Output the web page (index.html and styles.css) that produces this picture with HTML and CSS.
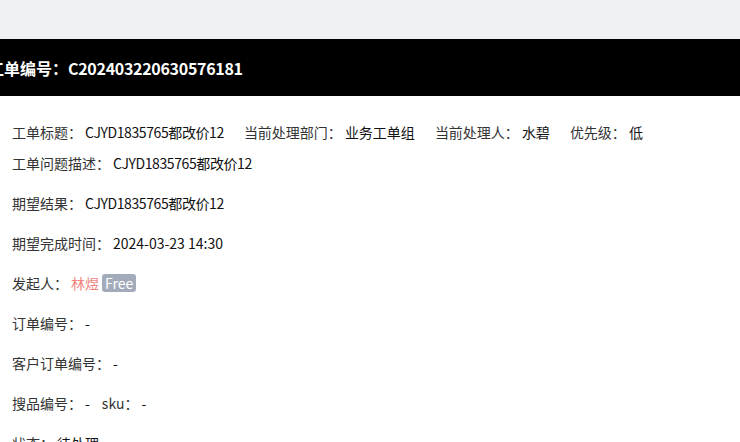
FILE: index.html
```html
<!DOCTYPE html>
<html lang="zh">
<head>
<meta charset="utf-8">
<link rel="stylesheet" href="styles.css">
</head>
<body>
<div class="topbar"></div>
<div class="header"><h1 class="title">工单编号：<span class="num">C202403220630576181</span></h1></div>
<div class="content">
  <div class="row row-first">
    <span class="item"><span class="label">工单标题：</span><span class="value code">CJYD1835765都改价12</span></span>
    <span class="item"><span class="label">当前处理部门：</span><span class="value">业务工单组</span></span>
    <span class="item"><span class="label">当前处理人：</span><span class="value">水碧</span></span>
    <span class="item"><span class="label">优先级：</span><span class="value">低</span></span>
  </div>
  <div class="row row-second"><span class="label">工单问题描述：</span><span class="value code">CJYD1835765都改价12</span></div>
  <div class="row"><span class="label">期望结果：</span><span class="value code">CJYD1835765都改价12</span></div>
  <div class="row"><span class="label">期望完成时间：</span><span class="value">2024-03-23 14:30</span></div>
  <div class="row"><span class="label">发起人：</span><span class="value user">林煜</span><span class="badge">Free</span></div>
  <div class="row"><span class="label">订单编号：</span><span class="value">-</span></div>
  <div class="row"><span class="label">客户订单编号：</span><span class="value">-</span></div>
  <div class="row"><span class="label">搜品编号：</span><span class="value">-</span><span class="label sku">sku：</span><span class="value">-</span></div>
  <div class="row"><span class="label">状态：</span><span class="value">待处理</span></div>
</div>
</body>
</html>
```
FILE: styles.css
```css
html, body {
  margin: 0;
  padding: 0;
  background: #fff;
  font-family: "Noto Sans CJK SC", sans-serif;
  font-size: 14px;
  color: #333;
  overflow: hidden;
}
.topbar {
  height: 39px;
  background: #f0f1f4;
}
.header {
  height: 57px;
  background: #000;
  display: flex;
  align-items: center;
}
.title {
  margin: 0 0 0 -12px;
  font-size: 16px;
  font-weight: 700;
  color: #fff;
  line-height: 20px;
}
.num {
  letter-spacing: -0.3px;
}
.content {
  padding: 26px 12px 0;
}
.row {
  display: flex;
  align-items: center;
  height: 20px;
  line-height: 20px;
  margin-bottom: 20px;
  white-space: nowrap;
}
.row-first {
  gap: 20px;
  margin-bottom: 11px;
}
.item {
  display: flex;
}
.label {
  color: #333;
}
.value {
  color: #111;
  margin-left: 3px;
}
.code {
  letter-spacing: -0.4px;
}
.user {
  color: #f0857f;
}
.badge {
  margin-left: 3px;
  background: #a3abbb;
  color: #fff;
  border-radius: 3px;
  padding: 0 3px;
  line-height: 18px;
  height: 18px;
}
.sku {
  margin-left: 12px;
}
```
